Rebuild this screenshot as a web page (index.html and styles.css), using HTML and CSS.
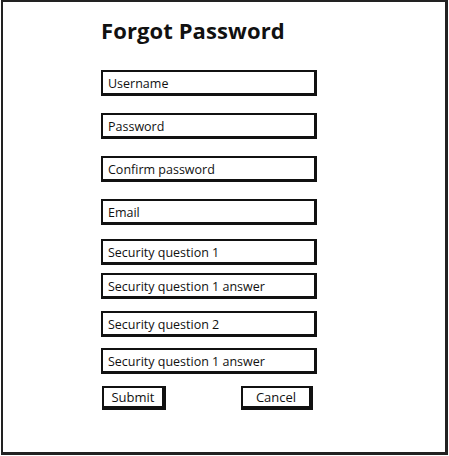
FILE: index.html
```html
<!DOCTYPE html>
<html lang="en">
<head>
    <meta charset="UTF-8">
    <meta name="viewport" content="width=device-width, initial-scale=1.0">
    <title>Forgot Password</title>
    <link rel="stylesheet" href="styles.css">
</head>
<body>
    <div class="frame">
        <div class="form">
            <h1 class="title">Forgot Password</h1>
            <div class="field f-user">Username</div>
            <div class="field f-pass">Password</div>
            <div class="field f-confirm">Confirm password</div>
            <div class="field f-email">Email</div>
            <div class="field f-q1">Security question 1</div>
            <div class="field f-a1">Security question 1 answer</div>
            <div class="field f-q2">Security question 2</div>
            <div class="field f-a2">Security question 1 answer</div>
            <div class="actions">
                <button class="button submit">Submit</button>
                <button class="button cancel">Cancel</button>
            </div>
        </div>
    </div>
</body>
</html>
```

FILE: styles.css
```css
body {
    margin: 0;
    background: #fff;
    font-family: "Open Sans", "DejaVu Sans", sans-serif;
    color: #111;
}
.frame {
    box-sizing: border-box;
    width: 447px;
    height: 455px;
    margin-left: 1px;
    border: 2px solid #222;
    border-right-width: 3px;
    border-bottom-width: 3px;
}
.form {
    display: flex;
    flex-direction: column;
    padding: 12px 0 0 98px;
    width: 216px;
}
.title {
    margin: 0 0 24px 0;
    font-size: 22px;
    font-weight: 700;
    line-height: 32px;
    letter-spacing: 0.1px;
}
.field {
    box-sizing: border-box;
    height: 26px;
    border: 2px solid #111;
    border-right-width: 3px;
    border-bottom-width: 3px;
    padding: 0 0 0 5px;
    font-size: 12.5px;
    line-height: 23px;
    background: #fff;
}
.f-pass, .f-confirm, .f-email { margin-top: 17px; }
.f-q1 { margin-top: 14px; }
.f-a1 { margin-top: 8px; }
.f-q2 { margin-top: 12px; }
.f-a2 { margin-top: 11px; }
.actions {
    display: flex;
    justify-content: space-between;
    margin-top: 12px;
    padding: 0 4px 0 1px;
}
.button {
    box-sizing: border-box;
    height: 24px;
    border: 2px solid #111;
    border-right-width: 4px;
    border-bottom-width: 4px;
    background: #fff;
    font-family: inherit;
    font-size: 13px;
    color: #111;
    padding: 0;
}
.submit { width: 64px; }
.cancel { width: 72px; }
```
